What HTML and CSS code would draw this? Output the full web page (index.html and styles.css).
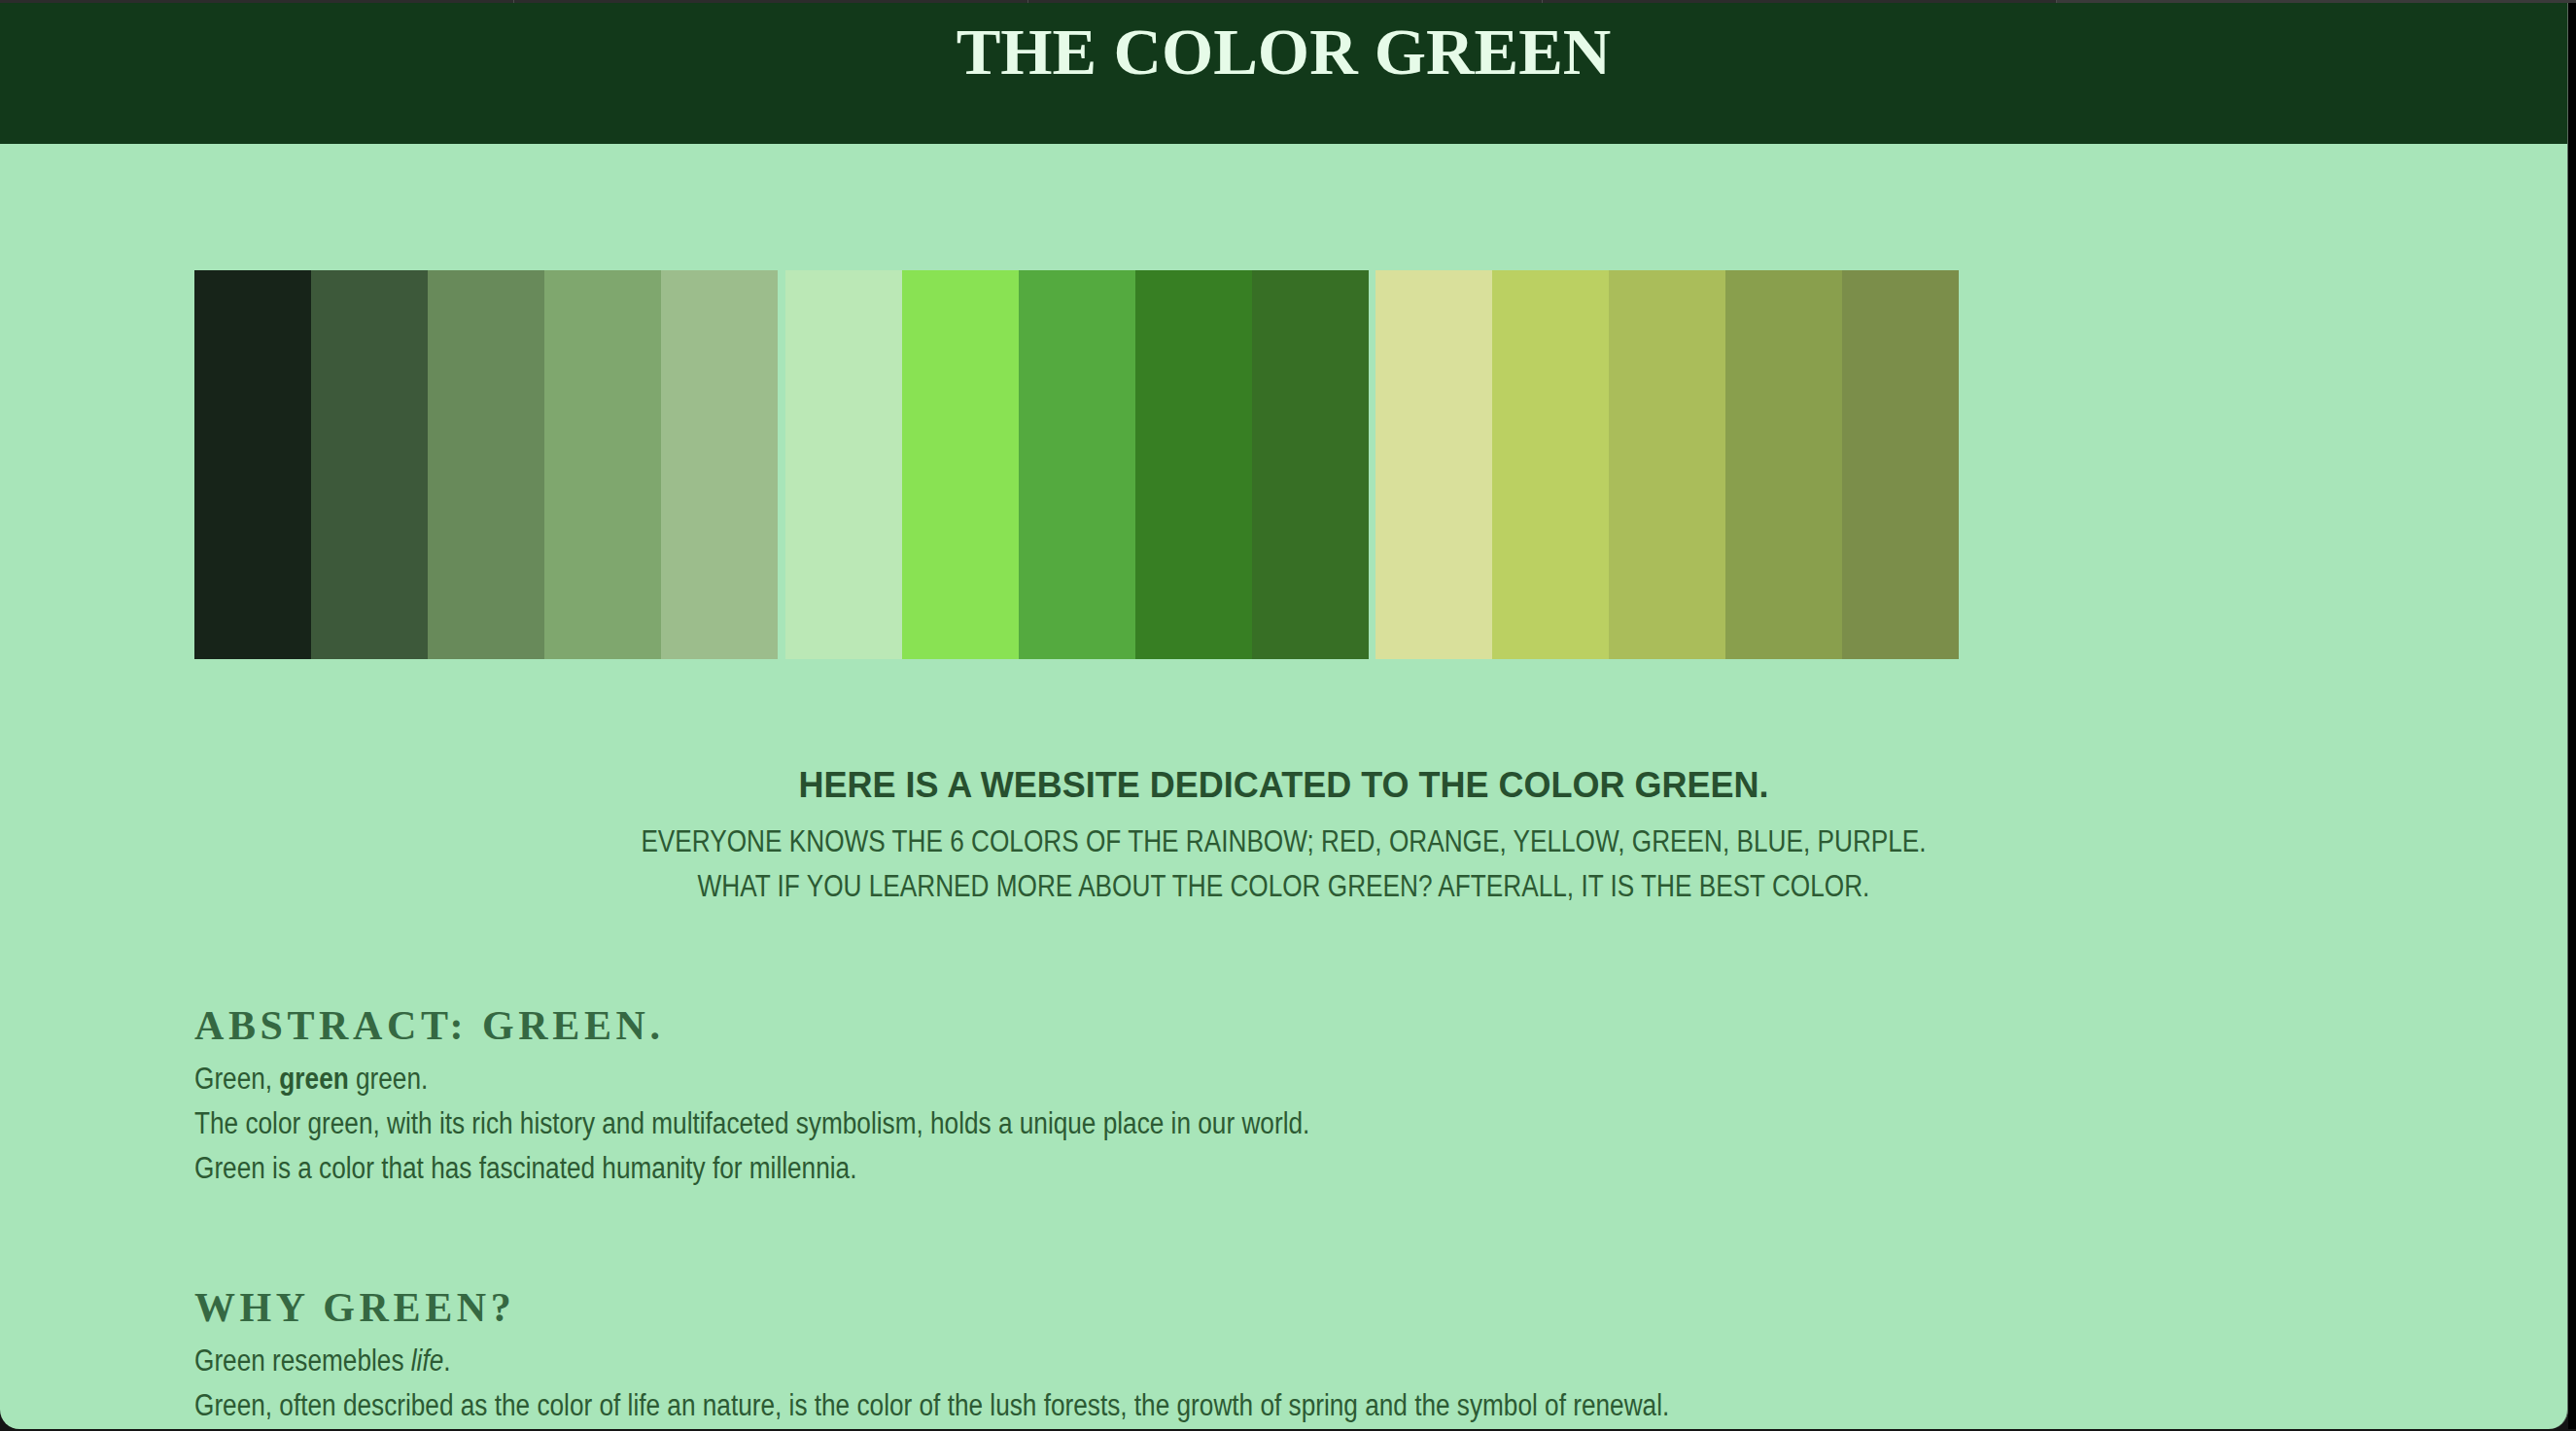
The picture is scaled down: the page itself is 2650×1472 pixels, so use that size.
FILE: index.html
```html
<!DOCTYPE html>
<html lang="en">
<head>
<meta charset="utf-8">
<title>The Color Green</title>
<link rel="stylesheet" href="styles.css">
</head>
<body>
<div class="chrome">
  <div class="tab"></div>
  <div class="tab"></div>
  <div class="tab"></div>
  <div class="tab"></div>
  <div class="tab tab-active"></div>
</div>
<div class="frame">
  <div class="window">
    <header class="site-header">
      <h1 class="site-title">THE COLOR GREEN</h1>
    </header>

    <div class="palettes">
      <div class="palette">
        <div class="swatch s1"></div>
        <div class="swatch s2"></div>
        <div class="swatch s3"></div>
        <div class="swatch s4"></div>
        <div class="swatch s5"></div>
      </div>
      <div class="palette">
        <div class="swatch s6"></div>
        <div class="swatch s7"></div>
        <div class="swatch s8"></div>
        <div class="swatch s9"></div>
        <div class="swatch s10"></div>
      </div>
      <div class="palette">
        <div class="swatch s11"></div>
        <div class="swatch s12"></div>
        <div class="swatch s13"></div>
        <div class="swatch s14"></div>
        <div class="swatch s15"></div>
      </div>
    </div>

    <div class="intro">
      <h2 class="intro-title">HERE IS A WEBSITE DEDICATED TO THE COLOR GREEN.</h2>
      <p class="intro-line first">EVERYONE KNOWS THE 6 COLORS OF THE RAINBOW; RED, ORANGE, YELLOW, GREEN, BLUE, PURPLE.</p>
      <p class="intro-line">WHAT IF YOU LEARNED MORE ABOUT THE COLOR GREEN? AFTERALL, IT IS THE BEST COLOR.</p>
    </div>

    <section class="section">
      <h3 class="section-title">ABSTRACT: GREEN.</h3>
      <p class="text">Green, <b>green</b> green.</p>
      <p class="text">The color green, with its rich history and multifaceted symbolism, holds a unique place in our world.</p>
      <p class="text">Green is a color that has fascinated humanity for millennia.</p>
    </section>

    <section class="section">
      <h3 class="section-title">WHY GREEN?</h3>
      <p class="text">Green resemebles <i>life</i>.</p>
      <p class="text">Green, often described as the color of life an nature, is the color of the lush forests, the growth of spring and the symbol of renewal.</p>
    </section>
  </div>
  <div class="edge"></div>
</div>
</body>
</html>
```

FILE: styles.css
```css
html, body {
  margin: 0;
  padding: 0;
}

body {
  width: 2650px;
  height: 1472px;
  overflow: hidden;
  background: #141414;
}

.chrome {
  display: flex;
  height: 3px;
  background: #2c2c2c;
}

.tab {
  width: 528px;
  border-right: 1px solid #4a4a4a;
}

.tab-active {
  flex: 1;
  border-right: none;
  background: #3a3a3a;
}

.frame {
  display: flex;
  height: 1467px;
}

.window {
  width: 2642px;
  height: 1467px;
  background: #a8e5b9;
  border-radius: 0 0 20px 20px;
  overflow: hidden;
  border-right: 1px solid #5a6a5e;
  box-sizing: border-box;
}

.edge {
  flex: 1;
  background: #000;
}

.site-header {
  background: #12391a;
  height: 145px;
  box-sizing: border-box;
  padding-top: 11px;
  text-align: center;
}

.site-title {
  margin: 0;
  font-family: "Liberation Serif", "Times New Roman", serif;
  font-weight: bold;
  font-size: 68.5px;
  line-height: normal;
  color: #e6fbe8;
}

.palettes {
  display: flex;
  gap: 7.5px;
  margin: 130px 0 0 200px;
}

.palette {
  display: flex;
}

.swatch {
  width: 120px;
  height: 400px;
}

.s1 { background: #172419; }
.s2 { background: #3d593a; }
.s3 { background: #688a5a; }
.s4 { background: #7fa76e; }
.s5 { background: #9cbd8c; }
.s6 { background: #bbe8b6; }
.s7 { background: #89e253; }
.s8 { background: #54aa3f; }
.s9 { background: #377f23; }
.s10 { background: #376f25; }
.s11 { background: #d9e09b; }
.s12 { background: #bbd062; }
.s13 { background: #aabd5a; }
.s14 { background: #899f4d; }
.s15 { background: #7b8e4a; }

.intro {
  margin-top: 109px;
  text-align: center;
}

.intro-title {
  margin: 0;
  font-family: "Liberation Sans", Arial, sans-serif;
  font-weight: bold;
  font-size: 36px;
  line-height: normal;
  color: #27502f;
}

.intro-line {
  margin: 0;
  font-family: "Liberation Sans", Arial, sans-serif;
  font-size: 31px;
  line-height: 46px;
  color: #2c5a33;
  transform: scaleX(0.845);
  transform-origin: center center;
}

.intro-line.first {
  margin-top: 14px;
}

.section {
  margin-top: 96px;
  padding-left: 200px;
}

.section-title {
  margin: 0 0 8px;
  font-family: "Liberation Serif", "Times New Roman", serif;
  font-weight: bold;
  font-size: 42px;
  line-height: normal;
  letter-spacing: 4.6px;
  color: #356842;
}

.text {
  margin: 0;
  font-family: "Liberation Sans", Arial, sans-serif;
  font-size: 31px;
  line-height: 46px;
  color: #2c5a33;
  transform: scaleX(0.845);
  transform-origin: left center;
}
```
